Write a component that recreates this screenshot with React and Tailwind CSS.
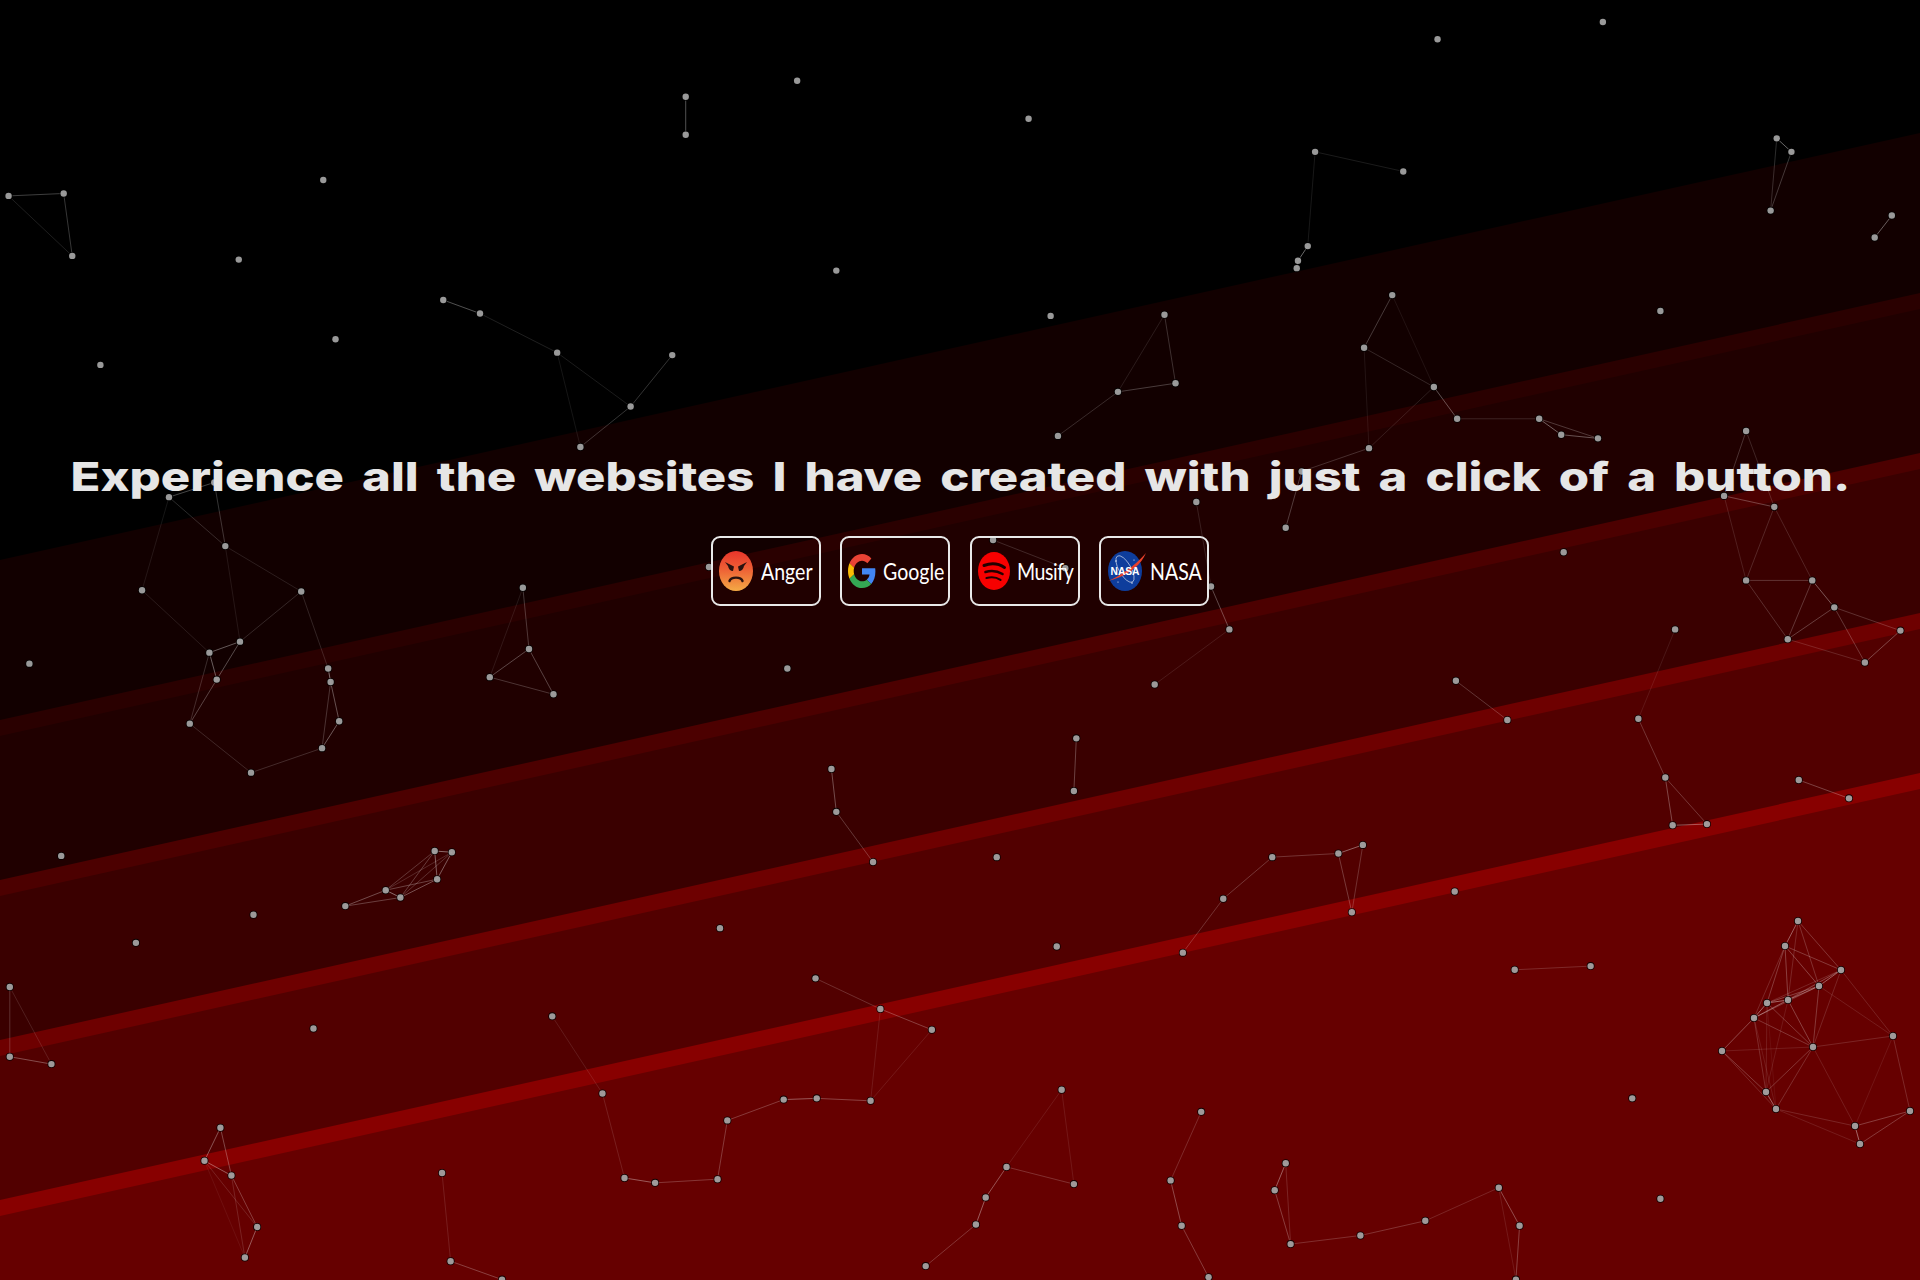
const S = 1920 / 1568;

// layered diagonal background, each layer runs up 427px across the page
const LAYERS = [
  [560, "#120000"],
  [720, "#2a0000"],
  [736, "#200000"],
  [880, "#4c0000"],
  [896, "#3a0000"],
  [1040, "#6e0000"],
  [1056, "#520000"],
  [1200, "#880000"],
  [1216, "#660000"],
];

// particle chains, coordinates as measured on the 1568 wide picture
const CHAINS = [
  [560, 79, 560, 110],
  [1146, 140, 1074, 124, 1068, 201, 1060, 213, 1059, 219],
  [1451, 113, 1463, 124, 1446, 172, 1451, 113],
  [1545, 176, 1531, 194],
  [7, 160, 52, 158, 59, 209, 7, 160],
  [362, 245, 392, 256, 455, 288, 515, 332, 549, 290],
  [455, 288, 474, 365, 515, 332],
  [951, 257, 960, 313, 913, 320, 951, 257],
  [913, 320, 864, 356],
  [1137, 241, 1114, 284, 1171, 316, 1190, 342, 1257, 342, 1275, 355, 1305, 358, 1257, 342],
  [1114, 284, 1118, 366, 1171, 316, 1137, 241],
  [1118, 366, 1063, 385, 1050, 431],
  [1426, 352, 1408, 405, 1449, 414, 1426, 352],
  [1408, 405, 1426, 474, 1480, 474, 1449, 414, 1426, 474, 1460, 522, 1480, 474, 1498, 496, 1460, 522, 1523, 541, 1498, 496, 1552, 515, 1523, 541],
  [175, 394, 138, 406, 184, 446, 175, 394],
  [138, 406, 116, 482, 171, 533, 196, 524, 184, 446, 246, 483, 196, 524, 177, 555, 171, 533, 155, 591, 177, 555],
  [246, 483, 268, 546, 270, 557, 277, 589, 263, 611, 205, 631, 155, 591],
  [263, 611, 270, 557],
  [427, 480, 432, 530, 400, 553, 452, 567, 432, 530],
  [427, 480, 400, 553],
  [811, 441, 870, 464],
  [977, 410, 989, 479, 1004, 514, 943, 559],
  [1368, 514, 1338, 587, 1360, 635, 1366, 674, 1394, 673, 1360, 635],
  [1189, 556, 1231, 588],
  [879, 603, 877, 646],
  [679, 628, 683, 663, 713, 704],
  [1469, 637, 1510, 652],
  [282, 740, 315, 727, 355, 695, 369, 696, 357, 718, 327, 733, 282, 740],
  [315, 727, 327, 733, 355, 695, 357, 718, 315, 727, 369, 696, 327, 733],
  [966, 778, 999, 734, 1039, 700, 1093, 697, 1113, 690, 1104, 745, 1093, 697],
  [1237, 792, 1299, 789],
  [8, 806, 8, 863, 42, 869, 8, 806],
  [666, 799, 719, 824, 761, 841, 711, 899, 719, 824],
  [451, 830, 492, 893, 510, 962, 535, 966, 586, 963, 594, 915, 640, 898, 667, 897, 711, 899],
  [867, 890, 822, 953, 877, 967, 867, 890],
  [822, 953, 805, 978, 797, 1000, 756, 1034],
  [981, 908, 956, 964, 965, 1001, 987, 1043],
  [1041, 972, 1050, 950, 1054, 1016, 1041, 972],
  [1054, 1016, 1111, 1009, 1164, 997, 1224, 970, 1241, 1001, 1238, 1045, 1224, 970],
  [361, 958, 368, 1030, 410, 1045],
  [180, 921, 167, 948, 189, 960, 180, 921],
  [167, 948, 210, 1002, 189, 960, 200, 1027, 210, 1002],
  [167, 948, 200, 1027],
];

const LONE = [
  [1309, 18], [1174, 32], [651, 66], [840, 97], [264, 147], [195, 212], [683, 221],
  [274, 277], [82, 298], [858, 258], [1356, 254], [24, 542], [643, 546], [1277, 451],
  [579, 463], [50, 699], [814, 700], [207, 747], [111, 770], [588, 758], [863, 773],
  [1188, 728], [256, 840], [1333, 897], [1356, 979],
];

// dense cluster bottom right, real page pixels
const NODES = [
  [1798, 921], [1785, 946], [1841, 970], [1819, 986], [1767, 1003], [1788, 1000], [1754, 1018], [1722, 1051],
  [1813, 1047], [1893, 1036], [1766, 1092], [1776, 1109], [1855, 1126], [1860, 1144], [1910, 1111],
];
const EDGES = [
  [0, 1], [0, 5], [0, 3], [0, 2], [1, 6], [1, 4], [1, 5], [1, 3], [1, 2], [2, 3], [2, 5], [2, 4], [2, 6], [2, 8], [2, 9],
  [3, 5], [3, 4], [3, 6], [3, 8], [3, 9], [4, 5], [4, 6], [4, 10], [4, 8], [5, 6], [5, 8], [5, 10], [6, 7], [6, 8], [6, 10],
  [6, 11], [4, 11], [7, 10], [7, 11], [7, 8], [8, 10], [8, 11], [8, 9], [8, 12], [9, 12], [9, 14], [10, 11], [11, 12], [11, 13],
  [12, 13], [12, 14], [13, 14],
];

function buildParticles() {
  const lines = [];
  const dots = new Map();
  const addDot = (x, y) => dots.set(`${Math.round(x)},${Math.round(y)}`, [x, y]);
  CHAINS.forEach((c) => {
    for (let i = 0; i < c.length; i += 2) {
      addDot(c[i] * S, c[i + 1] * S);
      if (i > 0) lines.push([c[i - 2] * S, c[i - 1] * S, c[i] * S, c[i + 1] * S]);
    }
  });
  LONE.forEach(([x, y]) => addDot(x * S, y * S));
  NODES.forEach(([x, y]) => addDot(x, y));
  EDGES.forEach(([a, b]) => lines.push([...NODES[a], ...NODES[b]]));
  return { lines, dots: [...dots.values()] };
}

function Backdrop() {
  const { lines, dots } = buildParticles();
  return (
    <svg className="absolute inset-0 h-full w-full" viewBox="0 0 1920 1280">
      {LAYERS.map(([y, fill]) => (
        <polygon key={y} points={`0,${y} 1920,${y - 427} 1920,1280 0,1280`} fill={fill} />
      ))}
      {lines.map(([x1, y1, x2, y2], i) => {
        const d = Math.hypot(x2 - x1, y2 - y1);
        const opacity = Math.max(0.03, 0.5 * Math.pow(Math.max(0, 1 - d / 130), 1.3));
        return <line key={i} x1={x1} y1={y1} x2={x2} y2={y2} stroke="#fff" strokeOpacity={opacity} />;
      })}
      {dots.map(([x, y], i) => (
        <g key={i}>
          <circle cx={x} cy={y} r="4" fill="#000" fillOpacity="0.85" />
          <circle cx={x} cy={y} r="3.2" fill="#fff" fillOpacity="0.6" />
        </g>
      ))}
    </svg>
  );
}

function AngerIcon() {
  return (
    <svg className="h-[40px] w-[34px] shrink-0" viewBox="0 0 34 40" preserveAspectRatio="none">
      <defs>
        <linearGradient id="angerFace" x1="0" y1="0" x2="0" y2="1">
          <stop offset="0" stopColor="#e8352b" />
          <stop offset="0.45" stopColor="#ee5f35" />
          <stop offset="1" stopColor="#f4aa45" />
        </linearGradient>
      </defs>
      <ellipse cx="17" cy="20" rx="17" ry="20" fill="url(#angerFace)" />
      <path d="M6 11 15 15.5 14 20C11.5 20 9.5 18 9 15L6 11Z" fill="#2a1210" />
      <path d="M28 11 19 15.5 20 20C22.5 20 24.5 18 25 15L28 11Z" fill="#2a1210" />
      <path d="M10.5 30C12 25.5 22 25.5 23.5 30" fill="none" stroke="#2a1210" strokeWidth="2.4" strokeLinecap="round" />
    </svg>
  );
}

function GoogleIcon() {
  return (
    <svg className="h-[34px] w-[28px] shrink-0" viewBox="0 0 48 48" preserveAspectRatio="none">
      <path fill="#EA4335" d="M24 9.5c3.54 0 6.71 1.22 9.21 3.6l6.85-6.85C35.9 2.38 30.47 0 24 0 14.62 0 6.51 5.38 2.56 13.22l7.98 6.19C12.43 13.72 17.74 9.5 24 9.5z" />
      <path fill="#4285F4" d="M46.98 24.55c0-1.57-.15-3.09-.38-4.55H24v9.02h12.94c-.58 2.96-2.26 5.48-4.78 7.18l7.73 6c4.51-4.18 7.09-10.36 7.09-17.65z" />
      <path fill="#FBBC05" d="M10.53 28.59c-.48-1.45-.76-2.99-.76-4.59s.27-3.14.76-4.59l-7.98-6.19C.92 16.46 0 20.12 0 24c0 3.88.92 7.54 2.56 10.78l7.97-6.19z" />
      <path fill="#34A853" d="M24 48c6.48 0 11.93-2.13 15.89-5.81l-7.73-6c-2.15 1.45-4.92 2.3-8.16 2.3-6.26 0-11.57-4.22-13.47-9.91l-7.98 6.19C6.51 42.62 14.62 48 24 48z" />
    </svg>
  );
}

function MusifyIcon() {
  return (
    <svg className="h-[38px] w-[32px] shrink-0" viewBox="0 0 32 38" preserveAspectRatio="none">
      <ellipse cx="16" cy="19" rx="16" ry="19" fill="#f70000" />
      <g fill="none" stroke="#220000" strokeLinecap="round">
        <path d="M6 13.5C13 11 21 11.8 26.5 15.5" strokeWidth="3" />
        <path d="M7.5 20C13 18.3 19.5 19 24.5 22" strokeWidth="2.6" />
        <path d="M8.5 26C13 24.8 18.5 25.2 22.5 27.8" strokeWidth="2.2" />
      </g>
    </svg>
  );
}

function NasaIcon() {
  return (
    <svg className="h-[40px] w-[40px] shrink-0" viewBox="0 0 40 40" preserveAspectRatio="none">
      <ellipse cx="17" cy="20" rx="17" ry="20" fill="#0e3d9c" />
      <ellipse cx="17" cy="18" rx="6" ry="15" fill="none" stroke="#dfe6f5" strokeWidth="0.6" transform="rotate(-30 17 18)" />
      <circle cx="8" cy="10" r="0.7" fill="#fff" />
      <circle cx="26" cy="9" r="0.6" fill="#fff" />
      <circle cx="10" cy="31" r="0.6" fill="#fff" />
      <circle cx="24" cy="32" r="0.7" fill="#fff" />
      <path d="M0 30C10 26 26 16 38 2C33 14 22 22 12 26C8 27.5 4 29 0 30Z" fill="#e8402a" />
      <text x="17" y="24" textAnchor="middle" fontSize="10.5" fontWeight="700" fill="#fff" fontFamily="Liberation Sans, sans-serif" textLength="29" lengthAdjust="spacingAndGlyphs">NASA</text>
    </svg>
  );
}

const BUTTONS = [
  { label: "Anger", Icon: AngerIcon, gap: "gap-[8px]", pad: "pl-[6px]", track: "" },
  { label: "Google", Icon: GoogleIcon, gap: "gap-[7px]", pad: "pl-[6px]", track: "" },
  { label: "Musify", Icon: MusifyIcon, gap: "gap-[7px]", pad: "pl-[6px]", track: "tracking-[-0.5px]" },
  { label: "NASA", Icon: NasaIcon, gap: "gap-[2px]", pad: "pl-[7px]", track: "" },
];

export default function App() {
  return (
    <div className="relative h-[1280px] w-full overflow-hidden bg-black font-['Lato',sans-serif]">
      <Backdrop />
      <div className="relative flex flex-col items-center pt-[449px]">
        <h1 className="origin-center scale-x-[1.225] whitespace-nowrap font-['Inter',sans-serif] text-[40px] font-extrabold leading-[56px] text-[#e6e6e6] [word-spacing:6px]">
          Experience all the websites I have created with just a click of a button.
        </h1>
        <div className="mt-[31px] flex gap-[19.5px]">
          {BUTTONS.map(({ label, Icon, gap, pad, track }) => (
            <a key={label} href="#" className={`flex h-[70px] w-[110px] items-center rounded-[9px] border-2 border-[#e8e8e8] ${gap} ${pad}`}>
              <Icon />
              <span className={`origin-left scale-x-[0.85] whitespace-nowrap text-[23px] leading-none text-white ${track}`}>{label}</span>
            </a>
          ))}
        </div>
      </div>
    </div>
  );
}
